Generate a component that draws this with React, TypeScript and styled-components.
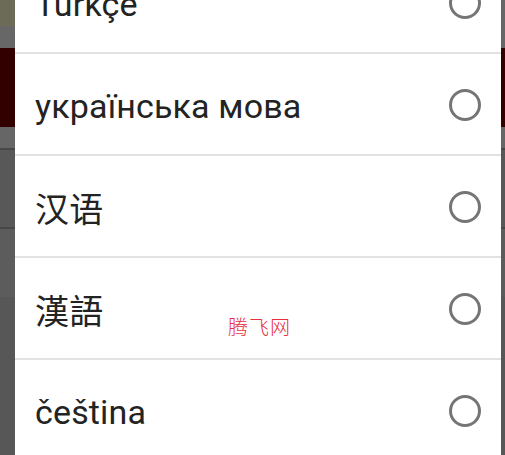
import React from "react";
import styled, { createGlobalStyle } from "styled-components";

const Global = createGlobalStyle`
  html, body { margin: 0; padding: 0; width: 505px; height: 455px; overflow: hidden; }
  body { font-family: Roboto, "Noto Sans", "Noto Sans CJK SC", sans-serif; background: #595959; }
`;

const Page = styled.div`
  position: relative;
  width: 505px;
  height: 455px;
  overflow: hidden;
  display: flex;
  flex-direction: column;
`;

const TopBar = styled.div`
  height: 48px;
  display: flex;
  flex-direction: column;
  background: #676767;
`;

const TopArt = styled.div`
  height: 26px;
  width: 120px;
  background: #6c6b58;
`;

const RedBar = styled.div`
  height: 79px;
  background: #330000;
`;

const Band = styled.div<{ $h: number; $bg: string; $line?: boolean }>`
  height: ${(p) => p.$h}px;
  background: ${(p) => p.$bg};
  border-bottom: ${(p) => (p.$line ? "2px solid #484848" : "none")};
  flex: ${(p) => (p.$h === 0 ? 1 : "none")};
`;

const Dialog = styled.div`
  position: absolute;
  top: 0;
  left: 15px;
  width: 486px;
  height: 455px;
  background: #ffffff;
  overflow: hidden;
`;

const List = styled.ul`
  list-style: none;
  margin: -48px 0 0;
  padding: 0;
`;

const Row = styled.li`
  height: 100px;
  border-bottom: 2px solid #e2e2e2;
  display: flex;
  align-items: center;
  justify-content: space-between;
  padding: 0 20px;
  box-sizing: content-box;
`;

const Label = styled.span`
  font-family: Roboto, "Noto Sans CJK SC", sans-serif;
  font-size: 34px;
  color: #232323;
  letter-spacing: 0.15px;
  margin-top: 3px;
`;

const Radio = styled.span`
  width: 26px;
  height: 26px;
  border: 3px solid #757575;
  border-radius: 50%;
  flex: none;
  margin-top: 2px;
`;

const Watermark = styled.div`
  position: absolute;
  left: 228px;
  top: 312px;
  font-family: "Noto Sans CJK SC", sans-serif;
  font-weight: 300;
  font-size: 20px;
  color: #e8303f;
  letter-spacing: 1px;
`;

const languages = ["Türkçe", "українська мова", "汉语", "漢語", "čeština"];

export default function App() {
  return (
    <>
      <Global />
      <Page>
        <TopBar>
          <TopArt />
        </TopBar>
        <RedBar />
        <Band $h={21} $bg="#666666" $line />
        <Band $h={77} $bg="#585858" $line />
        <Band $h={68} $bg="#5c5c5c" />
        <Band $h={0} $bg="#575757" />
        <Dialog>
          <List>
            {languages.map((l) => (
              <Row key={l}>
                <Label>{l}</Label>
                <Radio />
              </Row>
            ))}
          </List>
        </Dialog>
        <Watermark>腾飞网</Watermark>
      </Page>
    </>
  );
}
